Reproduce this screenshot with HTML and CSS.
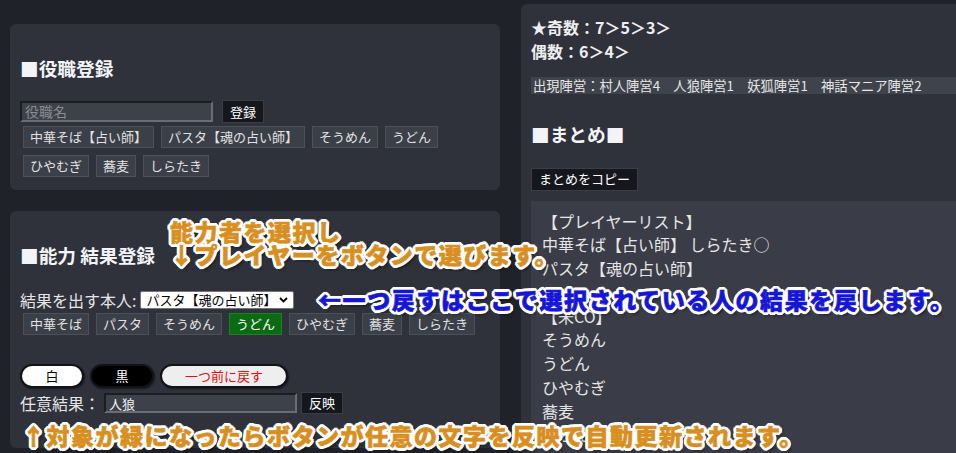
FILE: index.html
```html
<!DOCTYPE html>
<html lang="ja">
<head>
<meta charset="utf-8">
<title>役職登録</title>
<link rel="stylesheet" href="styles.css">
</head>
<body>
<div class="page">
  <div class="col-left">
    <section class="panel p1">
      <h3 class="title">■役職登録</h3>
      <div class="row">
        <input class="field" type="text" placeholder="役職名">
        <button class="btn dark gap9">登録</button>
      </div>
      <div class="chips">
        <button class="btn">中華そば【占い師】</button>
        <button class="btn">パスタ【魂の占い師】</button>
        <button class="btn">そうめん</button>
        <button class="btn">うどん</button>
        <button class="btn">ひやむぎ</button>
        <button class="btn">蕎麦</button>
        <button class="btn">しらたき</button>
      </div>
    </section>
    <section class="panel p2">
      <h3 class="title">■能力 結果登録</h3>
      <div class="row label-row">
        <span class="label">結果を出す本人:</span>
        <span class="picker-wrap">
          <select class="picker"><option>パスタ【魂の占い師】</option></select>
          <svg class="chev" width="9" height="6" viewBox="0 0 9 6"><path d="M1 1 L4.5 4.5 L8 1" fill="none" stroke="#000" stroke-width="1.8"/></svg>
        </span>
      </div>
      <div class="chips chips-2">
        <button class="btn">中華そば</button>
        <button class="btn">パスタ</button>
        <button class="btn">そうめん</button>
        <button class="btn on">うどん</button>
        <button class="btn">ひやむぎ</button>
        <button class="btn">蕎麦</button>
        <button class="btn">しらたき</button>
      </div>
      <div class="pills">
        <button class="pill white">白</button>
        <button class="pill black">黒</button>
        <button class="pill undo">一つ前に戻す</button>
      </div>
      <div class="row free-row">
        <span class="label">任意結果：</span>
        <input class="field" type="text" value="人狼">
        <button class="btn dark">反映</button>
      </div>
    </section>
  </div>
  <section class="panel right">
    <div class="seq">★奇数：7＞5＞3＞<br>偶数：6＞4＞</div>
    <div class="camps">出現陣営：村人陣営4　人狼陣営1　妖狐陣営1　神話マニア陣営2</div>
    <h3 class="title sum-title">■まとめ■</h3>
    <button class="btn dark">まとめをコピー</button>
    <div class="summary">【プレイヤーリスト】
中華そば【占い師】 しらたき○
パスタ【魂の占い師】

【未CO】
そうめん
うどん
ひやむぎ
蕎麦
しらたき</div>
  </section>
</div>
<div class="note orange note-a">能力者を選択し<br>↓プレイヤーをボタンで選びます。</div>
<div class="note blue note-b">←一つ戻すはここで選択されている人の結果を戻します。</div>
<div class="note orange note-c">↑対象が緑になったらボタンが任意の文字を反映で自動更新されます。</div>
</body>
</html>
```

FILE: styles.css
```css
html, body {
  margin: 0;
  padding: 0;
  height: 100%;
  overflow: hidden;
}
body {
  background: #1f2229;
  color: #e6e6e6;
  font-family: "Noto Sans CJK JP", "Noto Sans", sans-serif;
  font-size: 16px;
  position: relative;
}
.page {
  display: flex;
  align-items: flex-start;
  gap: 21px;
  padding-left: 10px;
  width: 1200px;
}
.col-left {
  width: 490px;
  padding-top: 24px;
  display: flex;
  flex-direction: column;
  gap: 21px;
}
.panel {
  background: #2f323b;
  border-radius: 6px;
  padding: 12px 10px 13px;
}
.title {
  margin: 19px 0 19px;
  font-size: 18.7px;
  line-height: 26px;
  font-weight: 700;
  color: #f2f4f8;
}
.row {
  display: flex;
  align-items: center;
  height: 23px;
}
.field {
  box-sizing: border-box;
  width: 193px;
  height: 21px;
  margin: 0;
  padding: 0 3px;
  background: #3d4149;
  border: 2px inset #6a6d73;
  color: #f0f0f0;
  font-family: inherit;
  font-size: 13px;
  line-height: 17px;
}
.field::placeholder {
  color: #8a8d93;
  font-size: 14px;
}
.btn {
  box-sizing: border-box;
  height: 22px;
  margin: 0;
  padding: 0 6px;
  background: #3b3f48;
  border: 1px solid #4c5059;
  border-radius: 0;
  color: #e2e2e2;
  font-family: inherit;
  font-size: 13px;
  line-height: 20px;
}
.btn.dark {
  background: #15171c;
  border-color: #3a3d44;
  color: #ffffff;
  height: 23px;
  padding: 0 7px;
}
.btn.on {
  background: #0b6b12;
  border-color: #1f7f25;
  color: #ffffff;
}
.gap9 {
  margin-left: 9px;
}
.chips {
  display: flex;
  flex-wrap: wrap;
  gap: 7px;
  margin: 3px 0 0 3px;
}
.p2 {
  padding-bottom: 34px;
}
.p2 .title {
  margin-bottom: 21px;
}
.label-row {
  height: 22px;
}
.label {
  font-size: 16px;
  line-height: 22px;
  color: #e6e6e6;
}
.picker-wrap {
  position: relative;
  display: inline-flex;
  margin-left: 4px;
}
.picker {
  -webkit-appearance: none;
  appearance: none;
  box-sizing: border-box;
  width: 154px;
  height: 18px;
  margin: 0;
  padding: 0 0 0 5px;
  background: #ffffff;
  color: #000000;
  border: 1px solid #767676;
  border-radius: 2px;
  font-family: inherit;
  font-size: 13px;
  line-height: 16px;
}
.chev {
  position: absolute;
  right: 6px;
  top: 6px;
}
.chips-2 {
  margin-top: 2px;
}
.pills {
  display: flex;
  gap: 6px;
  margin-top: 29px;
  height: 24px;
}
.pill {
  box-sizing: border-box;
  height: 24px;
  margin: 0;
  padding: 0;
  border: 2px solid #111318;
  border-radius: 12px;
  font-family: inherit;
  font-size: 13px;
  line-height: 20px;
  text-align: center;
  box-shadow: 1px 1px 2px rgba(0, 0, 0, 0.5);
}
.pill.white {
  background: #ffffff;
  color: #000000;
  width: 64px;
}
.pill.black {
  background: #000000;
  color: #ffffff;
  width: 64px;
}
.pill.undo {
  background: #eeeeee;
  color: #e01010;
  width: 128px;
}
.free-row {
  margin-top: 4px;
  height: 22px;
}
.free-row .field {
  margin-left: 4px;
  height: 20px;
}
.free-row .btn {
  margin-left: 4px;
  height: 22px;
}
.right {
  margin-top: 4px;
  width: 560px;
  padding: 11px 10px 20px;
}
.seq {
  font-size: 16px;
  font-weight: 700;
  line-height: 24px;
  color: #eeeeee;
}
.camps {
  margin-top: 14px;
  background: #3f444c;
  font-size: 13.3px;
  line-height: 17px;
  padding-left: 2px;
  color: #e6e6e6;
}
.sum-title {
  margin: 27px 0 18px;
}
.summary {
  margin-top: 10px;
  background: #3a3c47;
  padding: 9px 11px;
  font-size: 16px;
  line-height: 23.75px;
  white-space: pre;
  color: #e6e6e6;
  height: 300px;
}
.note {
  position: absolute;
  font-family: "Noto Sans CJK JP", sans-serif;
  font-weight: 900;
  font-size: 23px;
  letter-spacing: 1.5px;
  white-space: nowrap;
  -webkit-text-stroke: 0.6px currentColor;
  text-shadow:
    2px 0 #fff, -2px 0 #fff, 0 2px #fff, 0 -2px #fff,
    2px 2px #fff, -2px -2px #fff, 2px -2px #fff, -2px 2px #fff,
    3px 1px #fff, -3px 1px #fff, 1px 3px #fff, 1px -3px #fff,
    3px -1px #fff, -3px -1px #fff, -1px 3px #fff, -1px -3px #fff,
    3px 0 #fff, -3px 0 #fff, 0 3px #fff, 0 -3px #fff,
    3px 4px 3px rgba(0, 0, 0, 0.45);
}
.orange {
  color: #d98f1f;
}
.blue {
  color: #1616d6;
}
.note-a {
  left: 170px;
  top: 220px;
  line-height: 23px;
}
.note-b {
  left: 318px;
  top: 286px;
  line-height: 26px;
  letter-spacing: 1.6px;
}
.note-c {
  left: 22px;
  top: 422px;
  line-height: 26px;
}
```
